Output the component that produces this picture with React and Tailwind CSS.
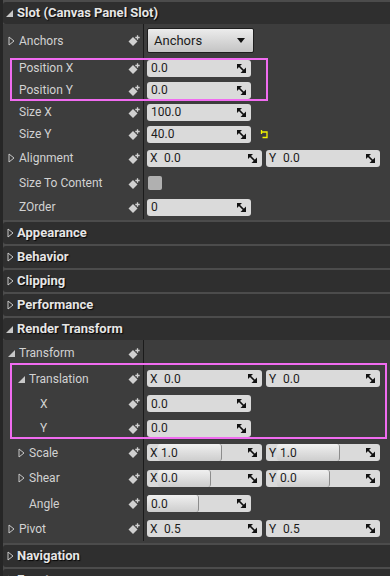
import React from "react";

function Collapsed({ className = "" }) {
  return (
    <svg width="7" height="10" viewBox="0 0 7 10" className={className}>
      <polygon points="1,1 6,5 1,9" fill="none" stroke="#c8c8c8" strokeWidth="1" />
    </svg>
  );
}

function Expanded({ className = "" }) {
  return (
    <svg width="7" height="8" viewBox="0 0 7 8" className={className}>
      <polygon points="7,1 7,8 0,8" fill="#c8c8c8" />
    </svg>
  );
}

function KeyIcon() {
  return (
    <svg width="12" height="11" viewBox="0 0 12 11" className="shrink-0">
      <polygon points="0.5,6.5 5,2 9.5,6.5 5,11" fill="#d0d0d0" />
      <path d="M9.5 0.3 V4.7 M7.3 2.5 H11.7" stroke="#d0d0d0" strokeWidth="1.3" />
    </svg>
  );
}

function DragIcon() {
  return (
    <svg width="9" height="9" viewBox="0 0 9 9" className="shrink-0">
      <polygon points="0,0 5,0 0,5" fill="#111" />
      <polygon points="9,9 3.5,9 9,3.5" fill="#111" />
      <path d="M1.5 1.5 L7 7" stroke="#111" strokeWidth="1.7" />
    </svg>
  );
}

function ResetIcon() {
  return (
    <svg width="9" height="9" viewBox="0 0 9 9" className="ml-[9px]">
      <path d="M1 2 H7 V7.5 H2.5" fill="none" stroke="#f5f500" strokeWidth="1.3" />
      <path d="M1.5 0 V4" stroke="#f5f500" strokeWidth="1.3" />
    </svg>
  );
}

function Header({ label, open }) {
  return (
    <div className="mt-[2px] h-[22px] bg-[#2f2f2f] rounded-l-[3px] flex items-center pl-[3px] shrink-0">
      <div className="w-[11px] flex items-center">
        {open ? <Expanded /> : <Collapsed className="ml-[1px]" />}
      </div>
      <span className="text-[13px] font-bold text-[#e6e6e6] [text-shadow:1px_1px_1px_rgba(0,0,0,0.9)]">
        {label}
      </span>
    </div>
  );
}

function Row({ h, level = 0, arrow, label, children }) {
  const pads = ["pl-[5px]", "pl-[15px]", "pl-[26px]"];
  return (
    <div className={`flex ${h}`}>
      <div className={`w-[140px] flex items-center ${pads[level]}`}>
        <div className="w-[11px] flex items-center">
          {arrow === "closed" && <Collapsed />}
          {arrow === "open" && <Expanded />}
        </div>
        <span className="text-[12px] text-[#d2d2d2] whitespace-nowrap">{label}</span>
        <div className="ml-auto mr-[3px] flex items-center">
          <KeyIcon />
        </div>
      </div>
      <div className="w-px bg-[#1b1b1b]" />
      <div className="flex-1 flex items-center pl-[3px]">{children}</div>
    </div>
  );
}

function Field({ value }) {
  return (
    <div className="w-[104px] h-[17px] rounded-[3px] bg-[#dadada] flex items-center justify-between pl-[4px] pr-[5px] text-[12px] text-[#1c1c1c]">
      <span>{value}</span>
      <DragIcon />
    </div>
  );
}

function Slider({ value, fill, w = "w-[104px]" }) {
  return (
    <div className={`${w} h-[17px] rounded-[3px] bg-[#dadada] flex items-center overflow-hidden text-[12px] text-[#1c1c1c]`}>
      <div
        className="h-full flex items-center pl-[4px] rounded-[3px] border-r border-[#8c8c8c] bg-gradient-to-b from-[#f0f0f0] to-[#cdcdcd]"
        style={{ width: fill }}
      >
        {value}
      </div>
      <div className="flex-1 flex justify-end pr-[5px]">
        <DragIcon />
      </div>
    </div>
  );
}

function Vec({ axis, value, fill, w }) {
  return (
    <div className={`${w} h-[17px] rounded-[3px] bg-[#dadada] flex items-center overflow-hidden text-[12px] text-[#1c1c1c]`}>
      <span className="w-[11px] pl-[3px] shrink-0">{axis}</span>
      {fill ? (
        <div
          className="h-full flex items-center pl-[3px] rounded-[3px] border-r border-[#8c8c8c] bg-gradient-to-b from-[#f0f0f0] to-[#cdcdcd] shrink-0"
          style={{ width: fill }}
        >
          {value}
        </div>
      ) : (
        <span className="pl-[6px]">{value}</span>
      )}
      <div className="flex-1 flex justify-end pr-[5px]">
        <DragIcon />
      </div>
    </div>
  );
}

function Vec2({ x, y, fx, fy }) {
  return (
    <div className="flex gap-[4px]">
      <Vec axis="X" value={x} fill={fx} w="w-[115px]" />
      <Vec axis="Y" value={y} fill={fy} w="w-[114px]" />
    </div>
  );
}

export default function App() {
  return (
    <div className="w-[390px] h-[576px] overflow-hidden bg-[#262626] font-['Roboto','Liberation_Sans',sans-serif] relative">
      <div className="ml-[3px] bg-[#4c4c4c] flex flex-col h-full">
        <Header label="Slot (Canvas Panel Slot)" open />
        <div className="bg-[#3d3d3d] flex flex-col pb-[1px]">
          <Row h="h-[33px]" arrow="closed" label="Anchors">
            <div className="w-[107px] h-[25px] rounded-[2px] border border-[#1e1e1e] bg-gradient-to-b from-[#ececec] to-[#c4c4c4] flex items-center justify-between pl-[6px] pr-[8px]">
              <span className="text-[13px] text-[#1a1a1a]">Anchors</span>
              <svg width="8" height="5" viewBox="0 0 8 5">
                <polygon points="0,0 8,0 4,5" fill="#111" />
              </svg>
            </div>
          </Row>
          <Row h="h-[22px]" label="Position X">
            <Field value="0.0" />
          </Row>
          <Row h="h-[22px]" label="Position Y">
            <Field value="0.0" />
          </Row>
          <Row h="h-[22px]" label="Size X">
            <Field value="100.0" />
          </Row>
          <Row h="h-[22px]" label="Size Y">
            <Field value="40.0" />
            <ResetIcon />
          </Row>
          <Row h="h-[26px]" arrow="closed" label="Alignment">
            <Vec2 x="0.0" y="0.0" />
          </Row>
          <Row h="h-[24px]" label="Size To Content">
            <div className="ml-[1px] w-[14px] h-[14px] rounded-[2px] bg-[#b0b0b0]" />
          </Row>
          <Row h="h-[24px]" label="ZOrder">
            <Field value="0" />
          </Row>
        </div>
        <Header label="Appearance" />
        <Header label="Behavior" />
        <Header label="Clipping" />
        <Header label="Performance" />
        <Header label="Render Transform" open />
        <div className="bg-[#3d3d3d] flex flex-col pb-[2px]">
          <Row h="h-[26px]" arrow="open" label="Transform" />
          <Row h="h-[25px]" level={1} arrow="open" label="Translation">
            <Vec2 x="0.0" y="0.0" />
          </Row>
          <Row h="h-[25px]" level={2} label="X">
            <Field value="0.0" />
          </Row>
          <Row h="h-[24px]" level={2} label="Y">
            <Field value="0.0" />
          </Row>
          <Row h="h-[25px]" level={1} arrow="closed" label="Scale">
            <Vec2 x="1.0" y="1.0" fx={64} fy={63} />
          </Row>
          <Row h="h-[26px]" level={1} arrow="closed" label="Shear">
            <Vec2 x="0.0" y="0.0" fx={53} fy={53} />
          </Row>
          <Row h="h-[25px]" level={1} label="Angle">
            <Slider value="0.0" fill={52} />
          </Row>
          <Row h="h-[25px]" arrow="closed" label="Pivot">
            <Vec2 x="0.5" y="0.5" />
          </Row>
        </div>
        <Header label="Navigation" />
        <Header label="Events" />
      </div>

      <div className="absolute left-[10px] top-[58px] w-[258px] h-[43px] border-2 border-[#f06cf0] pointer-events-none" />
      <div className="absolute left-[10px] top-[363px] w-[377px] h-[76px] border-2 border-[#f06cf0] pointer-events-none" />
    </div>
  );
}
